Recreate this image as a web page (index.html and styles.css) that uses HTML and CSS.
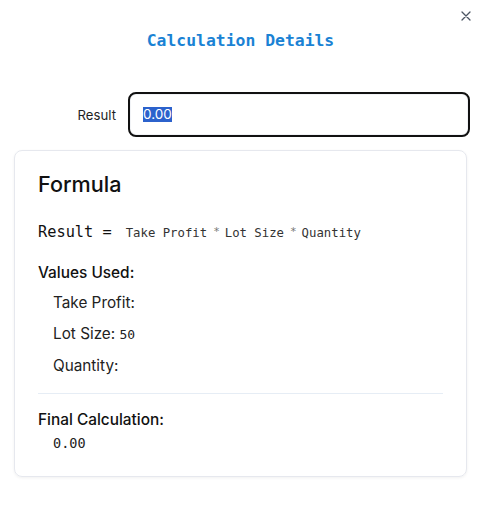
FILE: index.html
```html
<!DOCTYPE html>
<html>
<head>
<meta charset="utf-8">
<link rel="stylesheet" href="styles.css">
</head>
<body>
<div class="dialog">
  <button class="close" aria-label="Close">
    <svg width="10" height="10" viewBox="0 0 10 10"><path d="M1 1L9 9M9 1L1 9" stroke="#4b5563" stroke-width="1.3" stroke-linecap="round"/></svg>
  </button>
  <h2 class="title">Calculation Details</h2>
  <div class="field">
    <label class="field-label">Result</label>
    <div class="input"><span class="sel">0.00</span></div>
  </div>
  <div class="card">
    <h3 class="card-title">Formula</h3>
    <div class="formula">
      <span class="lhs">Result =</span>
      <span class="rhs">Take Profit</span><span class="op">*</span><span class="rhs">Lot Size</span><span class="op">*</span><span class="rhs">Quantity</span>
    </div>
    <div class="section-title">Values Used:</div>
    <ul class="values">
      <li>Take Profit: </li>
      <li>Lot Size: <span class="num">50</span></li>
      <li>Quantity: </li>
    </ul>
    <div class="divider"></div>
    <div class="section-title final">Final Calculation:</div>
    <div class="final-value">0.00</div>
  </div>
</div>
</body>
</html>
```
FILE: styles.css
```css
html, body {
  margin: 0;
  padding: 0;
  background: #ffffff;
}
body {
  font-family: Inter, "Noto Sans", sans-serif;
  color: #111111;
}
.dialog {
  position: relative;
  width: 483px;
  height: 512px;
  padding: 31px 16px 0 14px;
  box-sizing: border-box;
}
.close {
  position: absolute;
  top: 11px;
  right: 12px;
  width: 10px;
  height: 10px;
  padding: 0;
  border: 0;
  background: none;
  display: flex;
}
.title {
  margin: 0;
  text-align: center;
  font-family: "DejaVu Sans Mono", monospace;
  font-weight: bold;
  font-size: 16.4px;
  line-height: 20px;
  color: #1a82d4;
}
.field {
  margin-top: 41px;
  display: grid;
  grid-template-columns: 102px 342px;
  column-gap: 12px;
  align-items: center;
}
.field-label {
  text-align: right;
  font-size: 13.2px;
  color: #1f1f1f;
}
.input {
  height: 45px;
  box-sizing: border-box;
  border: 2px solid #111111;
  border-radius: 8px;
  padding: 0 13px;
  display: flex;
  align-items: center;
  box-shadow: inset 0 0 0 1px #f1f3f6;
}
.sel {
  background: #2c62cc;
  color: #ffffff;
  font-size: 13.5px;
  line-height: 15px;
}
.card {
  margin-top: 13px;
  width: 453px;
  box-sizing: border-box;
  border: 1px solid #e6e8ee;
  border-radius: 8px;
  box-shadow: 0 1px 3px rgba(0, 0, 0, 0.06);
  padding: 19px 23px 24px 23px;
}
.card-title {
  margin: 0;
  font-size: 21.6px;
  line-height: 28px;
  font-weight: 500;
  color: #111111;
}
.formula {
  margin-top: 24px;
  line-height: 20px;
  font-family: "DejaVu Sans Mono", monospace;
  display: flex;
  align-items: baseline;
}
.lhs {
  font-size: 15.3px;
  margin-right: 14px;
}
.rhs {
  font-size: 12.3px;
  color: #333333;
}
.op {
  font-size: 11px;
  color: #777777;
  margin: 0 5px 0 6px;
  position: relative;
  top: -2px;
}
.section-title {
  margin-top: 17px;
  font-size: 15.4px;
  line-height: 24px;
  font-weight: 500;
}
.values {
  list-style: none;
  margin: 6px 0 0 0;
  padding: 0 0 0 15px;
  display: flex;
  flex-direction: column;
  gap: 7px;
}
.values li {
  font-size: 15.3px;
  line-height: 24px;
  color: #222222;
}
.num {
  font-family: "DejaVu Sans Mono", monospace;
  font-size: 13px;
}
.divider {
  margin-top: 15px;
  height: 1px;
  background: #e6edf5;
}
.section-title.final {
  margin-top: 14px;
}
.final-value {
  margin-top: 2px;
  padding-left: 15px;
  font-family: "DejaVu Sans Mono", monospace;
  font-size: 13.5px;
  line-height: 18px;
  color: #222222;
}
```
